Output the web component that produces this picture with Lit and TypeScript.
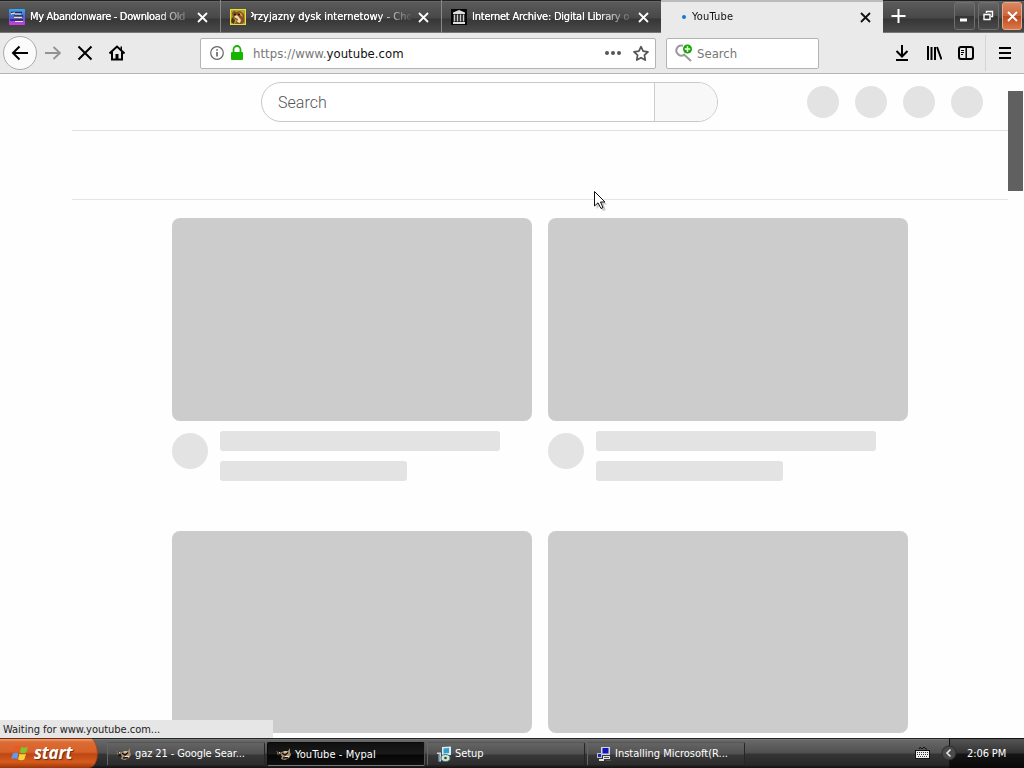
import { LitElement, html, css, svg } from "lit";
import { customElement } from "lit/decorators.js";

const closeX = svg`<svg width="11" height="11" viewBox="0 0 11 11"><path d="M1 1L10 10M10 1L1 10" stroke="currentColor" stroke-width="1.8" fill="none"/></svg>`;

const favAbandon = html`<svg width="16" height="16" viewBox="0 0 16 16">
  <defs><linearGradient id="g" x1="0" y1="0" x2="0" y2="1"><stop offset="0" stop-color="#38a8ee"/><stop offset=".5" stop-color="#4a62d6"/><stop offset="1" stop-color="#d33adf"/></linearGradient></defs>
  <rect width="16" height="16" rx="1" fill="url(#g)"/>
  <path d="M2 3.500H13M5 7H14M1 11H14" stroke="#20275e" stroke-width="1.500"/>
  <path d="M2 4.800L6 3.800M6 5H12M5 8.300H13M6 12.500H14" stroke="#f4e2b0" stroke-width="1.200"/></svg>`;

const favHamster = html`<svg width="16" height="16" viewBox="0 0 16 16">
  <rect width="16" height="16" fill="#b3a52a"/><rect x=".5" y=".5" width="15" height="15" fill="none" stroke="#dfe04a"/>
  <path d="M2 4L4 1.500L6 3L10 2L14 5L14.500 13L12 15H5L7 11L3 9Z" fill="#8a5222"/>
  <path d="M6 6L8 7L11 11L10 14L7 13L8 10L4 8Z" fill="#f0dcae"/><path d="M9 3L12 5L13 8L10 6Z" fill="#d69b4c"/>
  <path d="M2 8L5 11L4 15L1 13Z" fill="#4c3310"/>
  <circle cx="5" cy="5.500" r="1" fill="#1d1408"/><circle cx="9" cy="5.500" r=".9" fill="#1d1408"/></svg>`;

const favArchive = html`<svg width="16" height="16" viewBox="0 0 16 16">
  <rect width="16" height="16" fill="#050505"/>
  <path d="M8 1L14 3.500V5H2V3.500ZM2 13H14V15H2Z" fill="#ddd"/>
  <path d="M3.500 5.500V12.500M6.500 5.500V12.500M9.500 5.500V12.500M12.500 5.500V12.500" stroke="#ccc" stroke-width="1.600"/></svg>`;

const mypal = html`<svg width="16" height="16" viewBox="0 0 16 16">
  <path d="M.5 5L4 7L8 5L12 5L14 2L14 6L15 9L13 12L9 14L5 13L6 10L2 9.500Z" fill="#a88e70"/>
  <path d="M2 6L5 9.500M6 7L9 9L12 6.500M7 12L12 11.500M2 9L5 10" stroke="#1a120d" stroke-width="1.500" fill="none"/>
  <path d="M8 6H11M9 10.500H13" stroke="#f4e9cd" stroke-width="1.200"/><circle cx="3.500" cy="6.800" r=".9" fill="#e8d7b0"/></svg>`;

const setup = html`<svg width="16" height="16" viewBox="0 0 16 16">
  <path d="M6 1L15 .5V9L6 10Z" fill="#d8edf2"/><path d="M7.500 2.500L13 2V7L7.500 7.500Z" fill="#2f9fcb"/>
  <path d="M1 6.500H5V15.500H2.500V8H1Z" fill="#cfd6d9"/><path d="M3 8V15" stroke="#396e8b"/>
  <ellipse cx="9.500" cy="12" rx="4.500" ry="3.500" fill="#d7e6c4" stroke="#3c6f87"/><circle cx="9.500" cy="12" r="1.300" fill="#20475c"/></svg>`;

const installer = html`<svg width="16" height="16" viewBox="0 0 16 16">
  <path d="M5 1H14V9H5Z" fill="#cfd5dd"/><rect x="6.500" y="2" width="6" height="5.500" fill="#1414b8"/>
  <path d="M1 7H6V12H1Z" fill="#b9c2d2"/><rect x="2" y="8" width="3" height="3" fill="#1c26b0"/>
  <path d="M7 10H14V13H7ZM3 13H8V15H3Z" fill="#e2e2e2"/><path d="M8 11.500H13M10 14.500H15" stroke="#555"/></svg>`;

@customElement("app-root")
export class AppRoot extends LitElement {
  static styles = css`
    :host { display: flex; flex-direction: column; position: relative; width: 1024px; height: 768px; overflow: hidden; background: #fff;
      font-family: "DejaVu Sans Condensed", "DejaVu Sans", sans-serif; font-stretch: condensed; font-size: 11px; color: #111; }
    * { box-sizing: border-box; }
    svg { display: block; flex: none; }
    .strip { display: flex; height: 33px; background: linear-gradient(#222 0 1px, #666 1px 2px, #5a5a5a 2px, #484848 18px, #363636 19px, #4a4a4a 32px, #777 32px); }
    .tab { width: 221px; display: flex; align-items: center; padding: 1px 12px 0 9px; color: #fff; border-right: 1px solid #888; }
    .tab.third { width: 219px; border: 0; }
    .label { width: 161px; margin: 0 7px 0 5px; white-space: nowrap; overflow: hidden; line-height: 16px; letter-spacing: -.33px; text-shadow: 0 0 .6px #fff;
      -webkit-mask-image: linear-gradient(90deg, #000 125px, transparent 163px); mask-image: linear-gradient(90deg, #000 125px, transparent 163px); }
    .label.pl { letter-spacing: 0; text-indent: -3px; }
    .label.ia { letter-spacing: -.22px; }
    .tab.active { width: 222px; background: #eaeaea; color: #111; border: 0; border-top: 2px solid #bbb; padding: 0 12px 1px 21px; }
    .dot { width: 4px; height: 4px; border-radius: 50%; background: #1b73d3; flex: none; }
    .label.yt { text-shadow: none; letter-spacing: .2px; width: 158px; margin: 0 10px 0 6px; }
    .plus { width: 72px; padding: 9px 0 0 8px; color: #fff; }
    .win { width: 21px; height: 28px; margin: 2px 3px 0 0; border: 1px solid #707070; border-radius: 3px; display: grid; place-items: center; background: linear-gradient(#666, #4a4a4a 50%, #343434 52%, #4a4a4a); color: #fff; }
    .win:nth-last-child(3) { margin-left: -1px; }
    .win.close { width: 20px; margin-right: 0; border-color: #e9a88a; background: linear-gradient(#d98760, #cc6740 48%, #b84a22 50%, #db7746); }
    .bar { height: 41px; display: flex; align-items: center; background: #eaeaea; border-bottom: 1px solid #b5b5b5; color: #000; padding-left: 3px; }
    .back { width: 34px; height: 34px; border: 1px solid #aaa; border-radius: 50%; background: #fbfbfb; display: grid; place-items: center; }
    .nav { display: flex; gap: 16px; margin: 0 75px 0 8px; }
    .field { height: 31px; display: flex; align-items: center; background: #fff; border: 1px solid #b4b4b4; border-radius: 2px; font-size: 13px; }
    .url { width: 456px; padding-left: 9px; }
    .addr { margin-left: 10px; width: 352px; color: #777; letter-spacing: .03px; white-space: nowrap; }
    .addr b { font-weight: normal; color: #111; }
    .find { width: 153px; margin-left: 10px; padding-left: 7px; color: #777; letter-spacing: 0; }
    .find svg { margin-right: 4px; }
    .tools { display: flex; align-items: center; gap: 16px; margin-left: 75px; }
    .rule { width: 1px; height: 36px; background: #d4d4d4; margin: 0 12px 0 11px; }
    .page { height: 664px; display: flex; background: #fefefe; overflow: hidden; }
    .view { width: 936px; margin-left: 72px; flex: none; }
    .head { height: 57px; border-bottom: 1px solid #e2e2e2; display: flex; align-items: center; padding-left: 189px; }
    .box { display: flex; width: 457px; height: 40px; border: 1px solid #c8c8c8; border-radius: 20px; overflow: hidden; background: #fff; font: 300 16px/40px Roboto, sans-serif; color: #555; }
    .box .q { width: 393px; padding-left: 16px; border-right: 1px solid #ccc; letter-spacing: .05px; }
    .box .go { flex: 1; background: #f8f8f8; }
    .dots { display: flex; gap: 16px; margin-left: 89px; }
    .dots i { width: 32px; height: 32px; border-radius: 50%; background: #e3e3e3; }
    .chips { height: 69px; border-bottom: 1px solid #e5e5e5; }
    .grid { display: grid; grid-template-columns: 360px 360px; gap: 50px 16px; padding: 18px 0 0 100px; }
    .thumb { height: 203px; border-radius: 8px; background: #ccc; }
    .thumb.next { height: 202px; }
    .meta { display: flex; height: 60px; padding-top: 10px; }
    .avatar { width: 36px; height: 36px; border-radius: 50%; background: #e3e3e3; margin: 2px 12px 0 0; }
    .lines { display: flex; flex-direction: column; gap: 10px; }
    .lines i { height: 20px; width: 280px; border-radius: 3px; background: #e3e3e3; }
    .lines i.short { width: 187px; }
    .thumbbar { width: 15px; height: 100px; margin-top: 17px; background: #606060; }
    .status { position: absolute; left: 0; bottom: 30px; width: 273px; height: 18px; padding-left: 3px; line-height: 20px; background: #e6e6e6; color: #222; letter-spacing: -.02px; white-space: nowrap; }
    .cursor { position: absolute; left: 593px; top: 190px; }
    .task { height: 30px; display: flex; background: linear-gradient(#252525 0 1px, #777 1px 2px, #686868 2px, #505050 15px, #353535 16px, #282828 27px, #111 30px); color: #fff; }
    .start { width: 98px; height: 30px; display: flex; align-items: center; padding-left: 11px; border-radius: 0 9px 9px 0 / 0 15px 15px 0; border-right: 1px solid #a74115;
      background: linear-gradient(#6e2a0d 0 1px, #f0a173 1px, #dc6b35 4px, #d96129 14px, #bd4614 16px, #d65c1d 24px, #9c3508 30px); }
    .word { margin-left: 5px; font: italic bold 17px/28px "Open Sans", "Noto Sans", sans-serif; letter-spacing: -.2px; text-shadow: 1px 1px 1px #6b2a0c; }
    .btns { display: flex; gap: 2px; margin: 4px 0 0 9px; }
    .btn { width: 158px; height: 24px; padding: 0 0 1px 8px; display: flex; align-items: center; gap: 3px; white-space: nowrap; border: 1px solid; border-color: #555 #252525 #222 #666; border-radius: 2px; background: linear-gradient(#646464, #515151 11px, #383838 12px, #2c2c2c); }
    .btn.on { background: linear-gradient(#101010, #1a1a1a 11px, #050505 12px, #101010); border-color: #080808 #555 #777 #080808; padding-bottom: 0; }
    .btn .t { letter-spacing: -.1px; }
    .btn .t.pal { letter-spacing: .1px; }
    .btn .t.ins { letter-spacing: 0; }
    .tray { margin-left: auto; display: flex; align-items: center; width: 109px; }
    .clock { width: 75px; height: 30px; padding-left: 17px; line-height: 31px; white-space: nowrap; letter-spacing: -.1px; border-left: 1px solid #111; background: linear-gradient(#111 0 1px, #555 1px, #333 15px, #151515 16px, #080808); }
    .chev { position: absolute; right: 67px; bottom: 7px; }
  `;

  card(full: boolean) {
    return html`<div class="card"><div class="thumb ${full ? "" : "next"}"></div>
      ${full ? html`<div class="meta"><div class="avatar"></div><div class="lines"><i></i><i class="short"></i></div></div>` : ""}</div>`;
  }

  render() {
    return html`
      <div class="strip">
        <div class="tab">${favAbandon}<span class="label">My Abandonware - Download Old</span>${closeX}</div>
        <div class="tab">${favHamster}<span class="label pl">Przyjazny dysk internetowy - Cho</span>${closeX}</div>
        <div class="tab third">${favArchive}<span class="label ia">Internet Archive: Digital Library o</span>${closeX}</div>
        <div class="tab active"><span class="dot"></span><span class="label yt">YouTube</span>${closeX}</div>
        <div class="plus"><svg width="15" height="15" viewBox="0 0 15 15"><path d="M7.500 0V14M.5 7H14.500" stroke="#fff" stroke-width="2"/></svg></div>
        <div class="win"><svg width="11" height="14" viewBox="0 0 11 14"><path d="M1 11H8" stroke="#fff" stroke-width="3"/></svg></div>
        <div class="win"><svg width="11" height="12" viewBox="0 0 11 12"><path d="M3.500 3V1.500H9.500V6.500H8M1 4.500H7V9.500H1Z" fill="none" stroke="#fff" stroke-width="1.400"/></svg></div>
        <div class="win close">${closeX}</div>
      </div>
      <div class="bar">
        <div class="back"><svg width="18" height="16" viewBox="0 0 18 16"><path d="M17 8H2M8.500 1.500L2 8L8.500 14.500" fill="none" stroke="#000" stroke-width="2"/></svg></div>
        <div class="nav">
          <svg width="16" height="16" viewBox="0 0 16 16"><path d="M0 8H15M8.500 2L15 8L8.500 14" fill="none" stroke="#929292" stroke-width="1.800"/></svg>
          <svg width="16" height="16" viewBox="0 0 16 16"><path d="M1.500 1.500L14.500 14.500M14.500 1.500L1.500 14.500" stroke="#000" stroke-width="2"/></svg>
          <svg width="16" height="16" viewBox="0 0 16 16"><path d="M.5 8.500L8 1.500L15.500 8.500M3 7V14.500H13V7" fill="none" stroke="#000" stroke-width="2"/><path d="M6.500 14V9H9.500V14Z"/><path d="M11.500 1.500H13V5H11.500Z"/></svg>
        </div>
        <div class="field url">
          <svg width="14" height="14" viewBox="0 0 14 14"><circle cx="7" cy="7" r="6.300" fill="none" stroke="#666" stroke-width="1.200"/><path d="M7 6V10.500M7 3.300V4.800" stroke="#555" stroke-width="1.500"/></svg>
          <svg width="19" height="16" viewBox="0 0 19 16"><path d="M9.500 8V4.500A3.500 3.500 0 0 1 16.500 4.500V8" fill="none" stroke="#17b400" stroke-width="1.800"/><rect x="7" y="7" width="12" height="8" rx="1" fill="#17b400"/></svg>
          <span class="addr">https://www.<b>youtube.com</b></span>
          <svg width="16" height="6" viewBox="0 0 16 6"><g fill="#555"><circle cx="2" cy="3" r="2"/><circle cx="8" cy="3" r="2"/><circle cx="14" cy="3" r="2"/></g></svg>
          <svg width="28" height="17" viewBox="0 0 28 17"><path d="M20 1.700L22.100 6.200L27 6.800L23.400 10.200L24.300 15.100L20 12.700L15.700 15.100L16.600 10.200L13 6.800L17.900 6.200Z" fill="none" stroke="#555" stroke-width="1.700" stroke-linejoin="round"/></svg>
        </div>
        <div class="field find">
          <svg width="19" height="18" viewBox="0 0 19 18"><path d="M10.500 11L17 17M9 1.800A5 5 0 1 0 11 10" fill="none" stroke="#999" stroke-width="2"/><circle cx="13.500" cy="5" r="4.500" fill="#17a800"/><path d="M13.500 2.300V7.700M10.800 5H16.200" stroke="#fff" stroke-width="1.500"/></svg>
          <span>Search</span>
        </div>
        <div class="tools">
          <svg width="16" height="16" viewBox="0 0 16 16"><path d="M8 0V11M2.500 6L8 11.500L13.500 6M2 15H14" fill="none" stroke="#000" stroke-width="2"/></svg>
          <svg width="16" height="16" viewBox="0 0 16 16"><path d="M2 1V15M5.500 2V15M9 2V15M11 2L15.500 14.500" fill="none" stroke="#000" stroke-width="2"/></svg>
          <svg width="16" height="16" viewBox="0 0 16 16"><rect x="1" y="2" width="14" height="12" rx="2" fill="none" stroke="#000" stroke-width="2"/><path d="M8.200 2V14" stroke="#000" stroke-width="1.500"/><path d="M3 5.500H6M3 7.500H6M3 9.500H5" stroke="#000"/></svg>
        </div>
        <div class="rule"></div>
        <svg width="14" height="14" viewBox="0 0 14 14"><path d="M1 2H13M1 7H13M1 12H13" stroke="#000" stroke-width="2"/></svg>
      </div>
      <div class="page">
        <div class="view">
          <div class="head">
            <div class="box"><div class="q">Search</div><div class="go"></div></div>
            <div class="dots"><i></i><i></i><i></i><i></i></div>
          </div>
          <div class="chips"></div>
          <div class="grid">${this.card(true)}${this.card(true)}${this.card(false)}${this.card(false)}</div>
        </div>
        <div class="thumbbar"></div>
      </div>
      <div class="task">
        <div class="start">
          <svg width="18" height="18" viewBox="0 0 18 18"><path d="M3.500 3Q6.500 1 9.300 2.500L7.800 8Q5 6.800 2 8.500Z" fill="#e35c24"/><path d="M10.300 3Q13 4.500 17 2.800L15.200 8.600Q12 10 8.800 8.500Z" fill="#7fc52e"/><path d="M1.800 9.500Q4.800 8 7.500 9.200L6 15Q3.500 13.500 .3 15Z" fill="#5b9df0"/><path d="M8.500 9.700Q11.500 11 15 9.700L13.300 15.500Q10 17 7 15.400Z" fill="#f8d33a"/></svg>
          <span class="word">start</span>
        </div>
        <div class="btns">
          <div class="btn">${mypal}<span class="t">gaz 21 - Google Sear...</span></div>
          <div class="btn on">${mypal}<span class="t pal">YouTube - Mypal</span></div>
          <div class="btn">${setup}<span class="t">Setup</span></div>
          <div class="btn">${installer}<span class="t ins">Installing Microsoft(R...</span></div>
        </div>
        <div class="tray">
          <svg width="34" height="14" viewBox="0 0 34 14"><path d="M4 3Q5 0 6 2T8 2T10 2T12 3" fill="none" stroke="#111"/><rect x=".5" y="4.500" width="14" height="8" fill="#eee" stroke="#111"/><path d="M2 6.500H14M2 8.500H14" stroke="#333" stroke-dasharray="1 1"/><path d="M3 10.500H12" stroke="#444" stroke-dasharray="1 1"/></svg>
          <div class="clock">2:06 PM</div>
        </div>
      </div>
      <div class="status">Waiting for www.youtube.com...</div>
      <svg class="chev" width="16" height="16" viewBox="0 0 16 16"><circle cx="8" cy="8" r="7" fill="#4a4a4a" stroke="#2c2c2c"/><path d="M9.500 4.500L6 8L9.500 11.500" fill="none" stroke="#e8e8e8" stroke-width="1.600"/></svg>
      <svg class="cursor" width="16" height="22" viewBox="0 0 16 22"><path d="M3.500 4V19L7 15.500L10 21L13 20L10.500 14.500H14Z" fill="#999" opacity=".5"/><path d="M1.500 1.500V16L5 12.800L8 18.500L10 17.500L7.500 12H12Z" fill="#fff" stroke="#111"/></svg>
    `;
  }
}
